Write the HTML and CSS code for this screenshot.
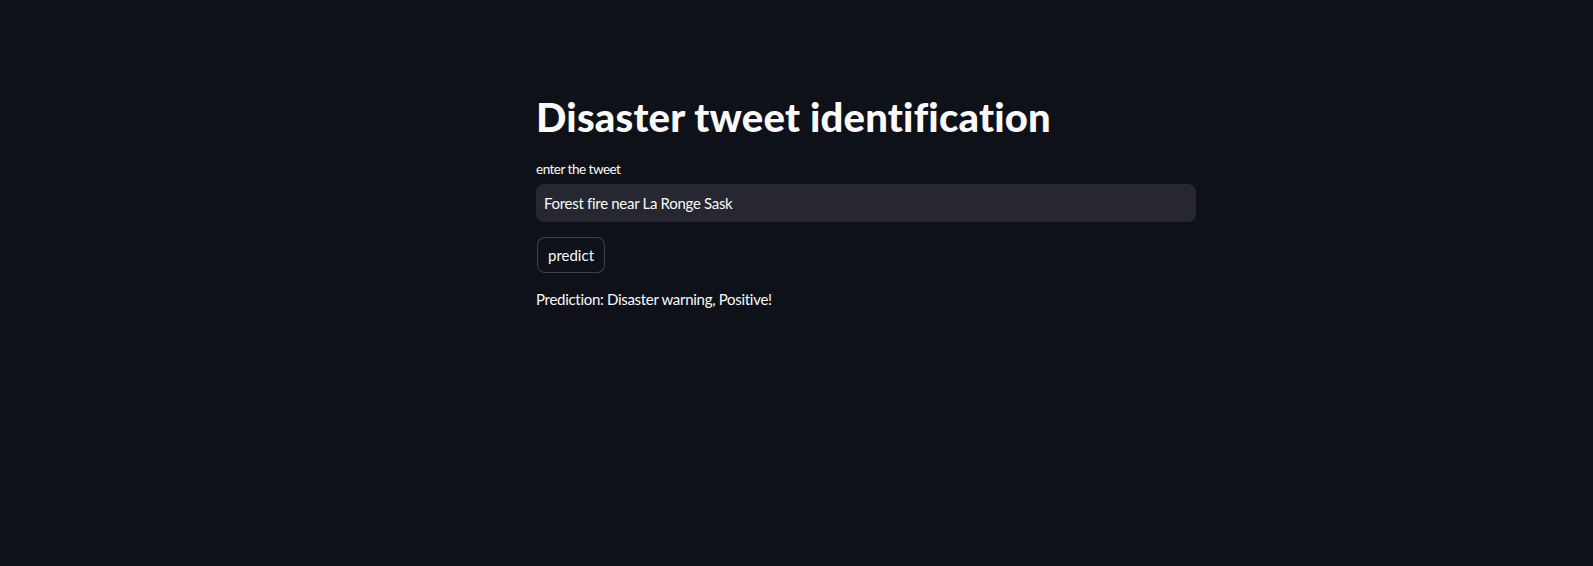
FILE: index.html
```html
<!DOCTYPE html>
<html lang="en">
<head>
<meta charset="utf-8">
<title>Disaster tweet identification</title>
<link rel="stylesheet" href="styles.css">
</head>
<body>
<div class="app">
  <main class="block">
    <h1 class="title">Disaster tweet identification</h1>
    <label class="label" for="tweet">enter the tweet</label>
    <div class="input-wrap">
      <input id="tweet" class="input" type="text" value="Forest fire near La Ronge Sask">
    </div>
    <div class="btn-row">
      <button class="btn" type="button">predict</button>
    </div>
    <p class="result">Prediction: Disaster warning, Positive!</p>
  </main>
</div>
</body>
</html>
```
FILE: styles.css
```css
html, body {
  margin: 0;
  padding: 0;
  background: #0e1117;
}
body {
  font-family: Lato, "Noto Sans", sans-serif;
  color: #fafafa;
}
.app {
  min-height: 100vh;
  background: #0e1117;
}
.block {
  width: 660px;
  margin-left: 536px;
  padding-top: 93px;
  display: flex;
  flex-direction: column;
  align-items: stretch;
}
.title {
  margin: 0;
  font-size: 40px;
  line-height: 1.2;
  font-weight: 900;
  color: #fafafa;
  letter-spacing: 0.2px;
}
.label {
  margin-top: 18px;
  font-size: 13.5px;
  line-height: 20px;
  letter-spacing: -0.5px;
  color: #fafafa;
}
.input-wrap {
  margin-top: 5px;
  height: 38px;
  background: #262730;
  border-radius: 8px;
  display: flex;
  align-items: center;
}
.input {
  width: 100%;
  height: 100%;
  box-sizing: border-box;
  background: transparent;
  border: 0;
  outline: none;
  padding: 0 8px;
  font-family: inherit;
  font-size: 15px;
  letter-spacing: -0.3px;
  color: #fafafa;
}
.btn-row {
  margin-top: 15px;
  display: flex;
}
.btn {
  height: 36px;
  width: 68px;
  box-sizing: border-box;
  margin-left: 1px;
  background: #0e1117;
  border: 1px solid rgba(250, 250, 250, 0.2);
  border-radius: 8px;
  color: #fafafa;
  font-family: inherit;
  font-size: 15px;
  padding: 0;
}
.result {
  margin: 14px 0 0;
  font-size: 15px;
  line-height: 24px;
  letter-spacing: -0.3px;
}
```
